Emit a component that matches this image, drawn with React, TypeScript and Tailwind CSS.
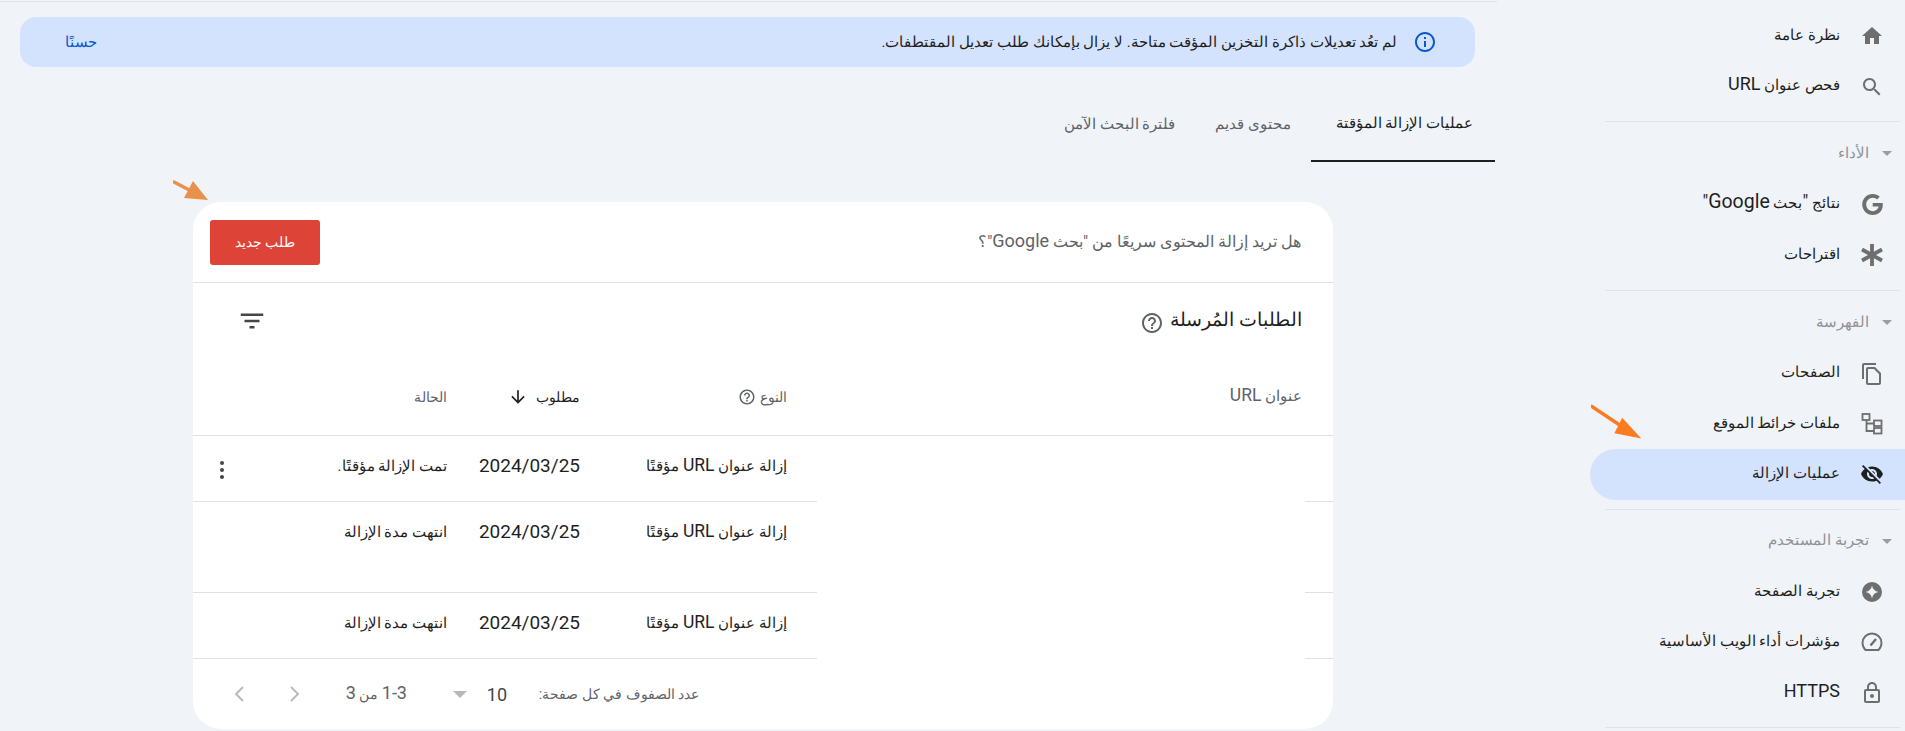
import React from "react";

const P = ({ d, className = "w-6 h-6 fill-[#6e6e6e]", rule }: { d: string; className?: string; rule?: "evenodd" }) => (
  <svg viewBox="0 0 24 24" className={className + " shrink-0"}>
    <path d={d} fillRule={rule} />
  </svg>
);

const d = {
  home: "M10 20v-6h4v6h5v-8h3L12 3 2 12h3v8z",
  search:
    "M15.5 14h-.79l-.28-.27C15.41 12.59 16 11.11 16 9.5 16 5.91 13.09 3 9.5 3S3 5.91 3 9.5 5.91 16 9.5 16c1.61 0 3.09-.59 4.23-1.57l.27.28v.79l5 4.99L20.49 19l-4.99-5zm-6 0C7.01 14 5 11.99 5 9.5S7.01 5 9.5 5 14 7.01 14 9.5 11.99 14 9.5 14z",
  g: "M12.24 10.285V14.4h6.806c-.275 1.765-2.056 5.174-6.806 5.174-4.095 0-7.439-3.389-7.439-7.574s3.345-7.574 7.439-7.574c2.33 0 3.891.989 4.785 1.849l3.254-3.138C18.189 1.186 15.479 0 12.24 0c-6.635 0-12 5.365-12 12s5.365 12 12 12c6.926 0 11.52-4.869 11.52-11.726 0-.788-.085-1.39-.189-1.989H12.24z",
  pages:
    "M16 1H4c-1.1 0-2 .9-2 2v14h2V3h12V1zm-1 4H8c-1.1 0-1.99.9-1.99 2L6 21c0 1.1.89 2 1.99 2H19c1.1 0 2-.9 2-2V11l-6-6zM8 21V7h6l5 5v9H8z",
  eye: "M12 7c2.76 0 5 2.24 5 5 0 .65-.13 1.26-.36 1.83l2.92 2.92c1.51-1.26 2.7-2.89 3.43-4.75-1.73-4.39-6-7.5-11-7.5-1.4 0-2.74.25-3.98.7l2.16 2.16C10.74 7.13 11.35 7 12 7zM2 4.27l2.28 2.28.46.46C3.08 8.3 1.78 10.02 1 12c1.73 4.39 6 7.5 11 7.5 1.55 0 3.03-.3 4.38-.84l.42.42L19.73 22 21 20.73 3.27 3 2 4.27zM7.53 9.8l1.55 1.55c-.05.21-.08.43-.08.65 0 1.66 1.34 3 3 3 .22 0 .44-.03.65-.08l1.55 1.55c-.67.33-1.41.53-2.2.53-2.76 0-5-2.24-5-5 0-.79.2-1.53.53-2.2zm4.31-.78l3.15 3.15.02-.16c0-1.66-1.34-3-3-3l-.17.01z",
  star: "M12 2a10 10 0 1 0 0 20 10 10 0 0 0 0-20zm0 3.5c.6 3.6 2.9 5.9 6.5 6.5-3.6.6-5.9 2.9-6.5 6.5-.6-3.6-2.9-5.9-6.5-6.5 3.6-.6 5.9-2.9 6.5-6.5z",
  lock: "M18 8h-1V6c0-2.76-2.24-5-5-5S7 3.24 7 6v2H6c-1.1 0-2 .9-2 2v10c0 1.1.9 2 2 2h12c1.1 0 2-.9 2-2V10c0-1.1-.9-2-2-2zM9 6c0-1.66 1.34-3 3-3s3 1.34 3 3v2H9V6zm9 14H6V10h12v10zm-6-3c1.1 0 2-.9 2-2s-.9-2-2-2-2 .9-2 2 .9 2 2 2z",
  help: "M11 18h2v-2h-2v2zm1-16C6.48 2 2 6.48 2 12s4.48 10 10 10 10-4.48 10-10S17.52 2 12 2zm0 18c-4.41 0-8-3.59-8-8s3.59-8 8-8 8 3.59 8 8-3.59 8-8 8zm0-14c-2.21 0-4 1.79-4 4h2c0-1.1.9-2 2-2s2 .9 2 2c0 2-3 1.75-3 5h2c0-2.25 3-2.5 3-5 0-2.21-1.79-4-4-4z",
  info: "M11 7h2v2h-2zm0 4h2v6h-2zm1-9C6.48 2 2 6.48 2 12s4.48 10 10 10 10-4.48 10-10S17.52 2 12 2zm0 18c-4.41 0-8-3.59-8-8s3.59-8 8-8 8 3.59 8 8-3.59 8-8 8z",
  filter: "M10 18h4v-2h-4v2zM3 6v2h18V6H3zm3 7h12v-2H6v2z",
  down: "M20 12l-1.41-1.41L13 16.17V4h-2v12.17l-5.58-5.59L4 12l8 8 8-8z",
};

const Asterisk = () => (
  <svg viewBox="0 0 24 24" className="w-6 h-6 shrink-0 stroke-[#6e6e6e]" strokeWidth="3.8">
    <path d="M12 1v22M2 6.5l20 11M22 6.5l-20 11" />
  </svg>
);

const Sitemap = () => (
  <svg viewBox="0 0 24 24" className="w-6 h-6 shrink-0 fill-none stroke-[#6e6e6e]" strokeWidth="1.8">
    <rect x="2.5" y="2" width="7" height="6" />
    <rect x="14" y="8.5" width="7.5" height="5.5" />
    <rect x="14" y="16" width="7.5" height="5.5" />
    <path d="M6.5 8v11h7.5M6.5 11.5H14" />
  </svg>
);

const Gauge = () => (
  <svg viewBox="0 0 24 24" className="w-6 h-6 shrink-0 fill-none stroke-[#6e6e6e]" strokeWidth="1.9" strokeLinejoin="round">
    <path d="M5.5 20h13c1.9-1.9 3-4.3 3-7A9.5 9.5 0 0 0 2.5 13c0 2.7 1.1 5.1 3 7z" />
    <path d="M10.5 15.5L16 9" strokeWidth="2.4" />
  </svg>
);

const Chevron = ({ left }: { left?: boolean }) => (
  <svg viewBox="0 0 10 16" className="w-[10px] h-4 shrink-0 fill-none stroke-[#b5b8bc]" strokeWidth="1.8">
    <path d={left ? "M9 1L2 8l7 7" : "M1 1l7 7-7 7"} />
  </svg>
);

const L = ({ children, size = "text-[18px]" }: { children: React.ReactNode; size?: string }) => (
  <span className={size + " leading-none"}>{children}</span>
);

const Row = ({ icon, label, active }: { icon: React.ReactNode; label: React.ReactNode; active?: boolean }) => (
  <div
    className={
      "flex items-center h-[50.4px] pr-[21px] gap-5 text-[15px] text-[#1f1f1f] " +
      (active ? "bg-[#d3e3fd] rounded-l-full" : "")
    }
  >
    <span className="w-6 h-6 flex items-center justify-center shrink-0">{icon}</span>
    <span className="pb-[2px]">{label}</span>
  </div>
);

const Head = ({ label }: { label: string }) => (
  <div className="h-[57.4px] pt-[6px] flex items-center pr-[13px] gap-[13px] text-[14.5px] text-[#8f9296]">
    <svg viewBox="0 0 10 5" className="w-[10px] h-[5px] fill-[#9a9da1] shrink-0">
      <path d="M0 0h10L5 5z" />
    </svg>
    <span>{label}</span>
  </div>
);

const Hr = () => <div className="h-px bg-[#e3e3e3] ml-[15px] mr-[5px]" />;

const TableRow = ({ status, kebab, h }: { status: string; kebab?: boolean; h: string }) => (
  <div className={"flex text-[15px] text-[#1f1f1f] " + h}>
    <div className="w-[28px] border-b border-[#e0e0e0]" />
    <div className="w-[488px]" />
    <div className="flex-1 flex border-b border-[#e0e0e0] pr-[30px] pt-5">
      <div className="w-[207px] leading-5">
        إزالة عنوان <L size="text-[17.5px]">URL</L> مؤقتًا
      </div>
      <div className="w-[133px] leading-5 text-[19px]">2024/03/25</div>
      <div className="flex-1 leading-5 flex justify-between pl-[27px]">
        <span>{status}</span>
        {kebab && (
          <svg viewBox="0 0 4 20" className="w-1 h-5 mt-[4px] fill-[#444746]">
            <circle cx="2" cy="3" r="2" />
            <circle cx="2" cy="10" r="2" />
            <circle cx="2" cy="17" r="2" />
          </svg>
        )}
      </div>
    </div>
  </div>
);

export default function App() {
  return (
    <div
      dir="rtl"
      className="relative flex h-[731px] w-[1905px] overflow-hidden bg-[#f0f4f9] font-['Roboto','Noto_Sans',sans-serif]"
    >
      <aside className="w-[408px] shrink-0 pl-[93px] pt-[11px]">
        <Row icon={<P d={d.home} className="w-6 h-6 fill-[#6e6e6e]" />} label="نظرة عامة" />
        <Row icon={<P d={d.search} />} label={<>فحص عنوان <L>URL</L></>} />
        <div className="h-[9px]" />
        <Hr />
        <Head label="الأداء" />
        <Row
          icon={<P d={d.g} className="w-[21px] h-[21px] fill-[#6e6e6e]" />}
          label={<>نتائج <L>"</L>بحث <L size="text-[19.5px]">Google</L><L>"</L></>}
        />
        <Row icon={<Asterisk />} label="اقتراحات" />
        <div className="h-[10px]" />
        <Hr />
        <Head label="الفهرسة" />
        <Row icon={<P d={d.pages} />} label="الصفحات" />
        <Row icon={<Sitemap />} label="ملفات خرائط الموقع" />
        <Row icon={<P d={d.eye} className="w-6 h-6 fill-[#1f1f1f]" />} label="عمليات الإزالة" active />
        <div className="h-[9px]" />
        <Hr />
        <Head label="تجربة المستخدم" />
        <Row icon={<P d={d.star} rule="evenodd" />} label="تجربة الصفحة" />
        <Row icon={<Gauge />} label="مؤشرات أداء الويب الأساسية" />
        <Row icon={<P d={d.lock} />} label={<L>HTTPS</L>} />
        <div className="h-[9px]" />
        <Hr />
      </aside>

      <main className="flex-1 pt-px">
        <div className="h-px bg-[#dfe3e8]" />
        <div className="mt-[15px] mr-[22px] ml-[20px] h-[50px] rounded-2xl bg-[#d3e3fd] flex items-center justify-between pr-[38px] pl-[45px] text-[15px]">
          <div className="flex items-center gap-4 text-[#1f1f1f]">
            <P d={d.info} className="w-6 h-6 fill-[#0b57d0]" />
            <span>لم تعُد تعديلات ذاكرة التخزين المؤقت متاحة. لا يزال بإمكانك طلب تعديل المقتطفات.</span>
          </div>
          <span className="text-[#0b57d0]">حسنًا</span>
        </div>

        <div className="mt-5 mr-[2px] h-[75px] flex text-[15px] text-[#5f6368]">
          <div className="w-[184px] pr-[22px] flex items-center border-b-2 border-[#1f1f1f] text-[#1f1f1f]">عمليات الإزالة المؤقتة</div>
          <div className="px-5 flex items-center">محتوى قديم</div>
          <div className="px-5 flex items-center">فلترة البحث الآمن</div>
        </div>

        <section className="mt-10 mr-[164px] w-[1140px] h-[527px] bg-white rounded-[28px] overflow-hidden">
          <div className="h-[81px] border-b border-[#e0e0e0] flex items-center justify-between pr-[32px] pl-[17px]">
            <span className="text-[16px] text-[#5f6368]">هل تريد إزالة المحتوى سريعًا من "بحث <L>Google</L>"؟</span>
            <button className="w-[110px] h-[45px] rounded-[3px] bg-[#dd4437] text-white text-[14px] font-medium">طلب جديد</button>
          </div>
          <div className="h-[76px] flex items-center justify-between pr-[31px] pl-[44px]">
            <div className="flex items-center gap-[6px] text-[18.5px] text-[#1f1f1f]">
              <span>الطلبات المُرسلة</span>
              <P d={d.help} className="w-6 h-6 fill-[#5f6368] mt-1" />
            </div>
            <P d={d.filter} className="w-[30px] h-[30px] fill-[#444746]" />
          </div>
          <div className="h-[77px] border-b border-[#e0e0e0] flex items-center pr-[31px] text-[13.5px] text-[#5f6368]">
            <div className="w-[515px] text-[14.5px]">
              عنوان <L size="text-[17.5px]">URL</L>
            </div>
            <div className="w-[207px] flex items-center gap-1">
              <span>النوع</span>
              <P d={d.help} className="w-[18px] h-[18px] fill-[#5f6368]" />
            </div>
            <div className="w-[133px] flex items-center gap-2 text-[14px] text-[#1f1f1f] font-medium">
              <span>مطلوب</span>
              <P d={d.down} className="w-5 h-5 fill-[#1f1f1f]" />
            </div>
            <div>الحالة</div>
          </div>
          <TableRow status="تمت الإزالة مؤقتًا." kebab h="h-[66px]" />
          <TableRow status="انتهت مدة الإزالة" h="h-[91px]" />
          <TableRow status="انتهت مدة الإزالة" h="h-[66px]" />
          <div className="h-[70px] flex items-center pr-[634px] text-[14px] text-[#5f6368]">
            <span className="w-[192px]">عدد الصفوف في كل صفحة:</span>
            <span className="w-[20px] text-[18px] text-[#444746]">10</span>
            <svg viewBox="0 0 14 7" className="mr-5 w-[14px] h-[7px] fill-[#b5b8bc] shrink-0">
              <path d="M0 0h14L7 7z" />
            </svg>
            <span className="mr-[46px] w-[62px] whitespace-nowrap">
              <L>1-3</L> من <L>3</L>
            </span>
            <span className="mr-[45px]">
              <Chevron />
            </span>
            <span className="mr-[46px]">
              <Chevron left />
            </span>
          </div>
        </section>
      </main>

      <svg viewBox="0 0 60 40" className="absolute left-[1591px] top-[404px] w-[52px] h-[36px]" dir="ltr">
        <path d="M1 2 L40 28" className="stroke-[#f97c22]" strokeWidth="4" strokeLinecap="round" fill="none" />
        <path d="M36 15 L58 39 L27 33 Z" className="fill-[#f97c22]" />
      </svg>
      <svg viewBox="0 0 36 21" className="absolute left-[173px] top-[180px] w-[36px] h-[21px]" dir="ltr">
        <path d="M1 2 L22 13" className="stroke-[#e8914a]" strokeWidth="3.5" strokeLinecap="round" fill="none" />
        <path d="M20 1 L35 20 L11 18 Z" className="fill-[#e8914a]" />
      </svg>
    </div>
  );
}
